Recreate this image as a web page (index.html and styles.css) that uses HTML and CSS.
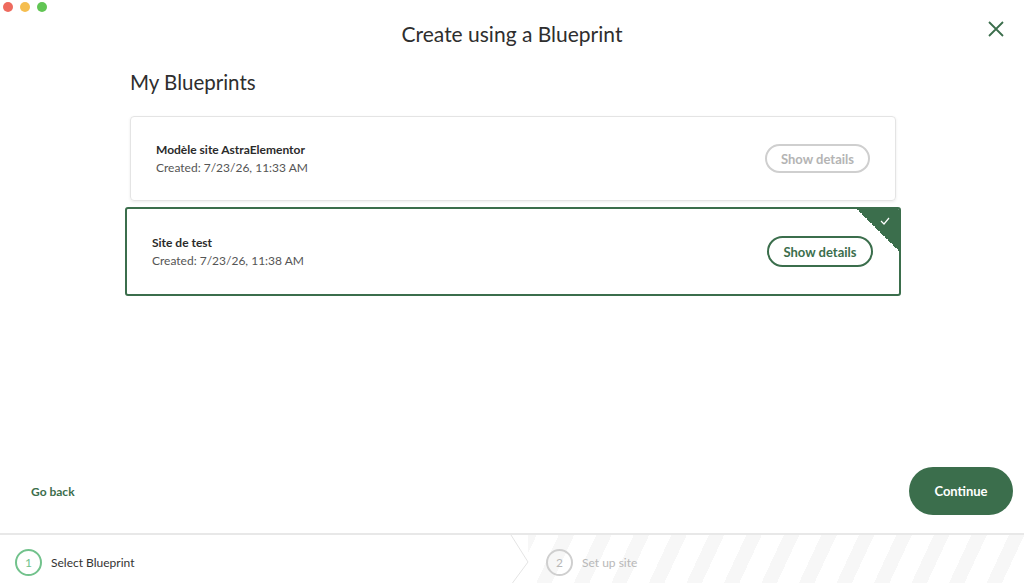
FILE: index.html
```html
<!DOCTYPE html>
<html lang="en">
  <head>
    <meta charset="UTF-8" />
    <title>Create using a Blueprint</title>
    <link rel="stylesheet" href="styles.css">
  </head>
  <body>
    <div class="window">
      <div class="lights">
        <span class="light red"></span>
        <span class="light yellow"></span>
        <span class="light green"></span>
      </div>

      <div class="header">
        <h1>Create using a Blueprint</h1>
        <button class="close" aria-label="Close">
          <svg width="16" height="16" viewBox="0 0 16 16">
            <path d="M1 1 L15 15 M15 1 L1 15" stroke="#3b6e4c" stroke-width="1.8" fill="none" />
          </svg>
        </button>
      </div>

      <div class="content">
        <h2>My Blueprints</h2>

        <div class="card">
          <div class="info">
            <div class="name">Modèle site AstraElementor</div>
            <div class="date">Created: 7/23/26, 11:33 AM</div>
          </div>
          <button class="details disabled">Show details</button>
        </div>

        <div class="card selected">
          <div class="info">
            <div class="name">Site de test</div>
            <div class="date">Created: 7/23/26, 11:38 AM</div>
          </div>
          <button class="details">Show details</button>
          <div class="corner">
            <svg width="10" height="8" viewBox="0 0 10 8">
              <path d="M1 4 L4 7 L9 1" stroke="#fff" stroke-width="1.2" fill="none" />
            </svg>
          </div>
        </div>
      </div>

      <div class="actions">
        <a class="back" href="#">Go back</a>
        <button class="continue">Continue</button>
      </div>

      <div class="stepper">
        <div class="step active">
          <span class="num">1</span>
          <span class="label">Select Blueprint</span>
          <svg class="chevron" width="20" height="50" viewBox="0 0 20 50">
            <path d="M0 0 L18 0 L18 50 L0 50 Z" fill="#fff" />
            <path d="M1 0 L18 27 L1 50" stroke="#e4e4e4" stroke-width="1" fill="#fff" />
          </svg>
        </div>
        <div class="step todo">
          <span class="num">2</span>
          <span class="label">Set up site</span>
        </div>
      </div>
    </div>
  </body>
</html>
```

FILE: styles.css
```css
body {
  margin: 0;
  padding: 0;
  background-color: #fff;
  font-family: Lato, "Open Sans", sans-serif;
  color: #333;
}

.window {
  height: 583px;
  width: 1024px;
  display: flex;
  flex-direction: column;
  position: relative;
  overflow: hidden;
}

.lights {
  position: absolute;
  top: 2px;
  left: 3px;
  display: flex;
  gap: 7px;
}

.light {
  width: 10px;
  height: 10px;
  border-radius: 50%;
}

.red {
  background-color: #ee6a5e;
}

.yellow {
  background-color: #f5be4f;
}

.green {
  background-color: #61c554;
}

.header {
  height: 66px;
  display: flex;
  justify-content: center;
  align-items: center;
  position: relative;
}

h1 {
  margin: 0;
  font-size: 21px;
  font-weight: 400;
  color: #2e2e2e;
}

.close {
  position: absolute;
  right: 20px;
  top: 21px;
  background: none;
  border: none;
  padding: 0;
  cursor: pointer;
}

.content {
  flex: 1;
  padding: 0 128px 0 130px;
  display: flex;
  flex-direction: column;
  gap: 6px;
}

h2 {
  margin: 4px 0 16px;
  font-size: 20.5px;
  font-weight: 400;
  color: #2e2e2e;
}

.card {
  height: 83px;
  border: 1px solid #e4e4e4;
  border-radius: 4px;
  box-shadow: 0 1px 3px rgba(0, 0, 0, 0.08);
  display: flex;
  align-items: center;
  justify-content: space-between;
  padding: 0 25px 0 25px;
  position: relative;
  overflow: hidden;
}

.card.selected {
  height: 85px;
  margin: 0 -5px;
  border: 2px solid #3b6e4c;
  border-radius: 3px;
  padding: 0 26px 0 25px;
  box-shadow: none;
}

.name {
  font-size: 12px;
  line-height: 18px;
  font-weight: 700;
  color: #2b2b2b;
}

.date {
  font-size: 12px;
  line-height: 18px;
  color: #555;
}

.details {
  font-family: inherit;
  background: #fff;
  border: 2px solid #3b6e4c;
  color: #3b6e4c;
  font-size: 13px;
  font-weight: 700;
  border-radius: 16px;
  height: 31px;
  width: 106px;
  cursor: pointer;
}

.details.disabled {
  border-color: #cfcfcf;
  color: #b4b4b4;
  height: 29px;
  width: 105px;
}

.corner {
  position: absolute;
  top: 0;
  right: 0;
  width: 42px;
  height: 42px;
  background: linear-gradient(to bottom left, #3b6e4c 50%, transparent 50%);
}

.corner svg {
  position: absolute;
  top: 8px;
  right: 9px;
}

.actions {
  display: flex;
  justify-content: space-between;
  align-items: center;
  padding: 0 11px 0 31px;
  margin-bottom: 18px;
}

.back {
  color: #3b6e4c;
  font-size: 12px;
  font-weight: 700;
  text-decoration: none;
}

.continue {
  font-family: inherit;
  background-color: #3b6e4c;
  color: #fff;
  border: none;
  border-radius: 24px;
  height: 48px;
  width: 104px;
  font-size: 13px;
  font-weight: 700;
  cursor: pointer;
}

.stepper {
  height: 48px;
  border-top: 2px solid #e8e8e8;
  display: flex;
}

.step {
  display: flex;
  align-items: center;
  gap: 9px;
  font-size: 12px;
  padding-top: 6px;
  box-sizing: border-box;
}

.step.active {
  width: 512px;
  padding-left: 15px;
  position: relative;
  z-index: 1;
  background: #fff;
}

.chevron {
  position: absolute;
  top: 0;
  right: -18px;
}

.step.todo {
  flex: 1;
  padding-left: 34px;
  background: repeating-linear-gradient(
    -65deg,
    #fff 0,
    #fff 20px,
    #f7f7f7 20px,
    #f7f7f7 34px
  );
}

.num {
  width: 23px;
  height: 23px;
  border-radius: 50%;
  display: flex;
  justify-content: center;
  align-items: center;
  font-size: 12px;
}

.active .num {
  border: 2px solid #72c28c;
  color: #72c28c;
}

.active .label {
  color: #333;
}

.todo .num {
  border: 2px solid #cfcfcf;
  color: #b8b8b8;
}

.todo .label {
  color: #b8b8b8;
}
```
